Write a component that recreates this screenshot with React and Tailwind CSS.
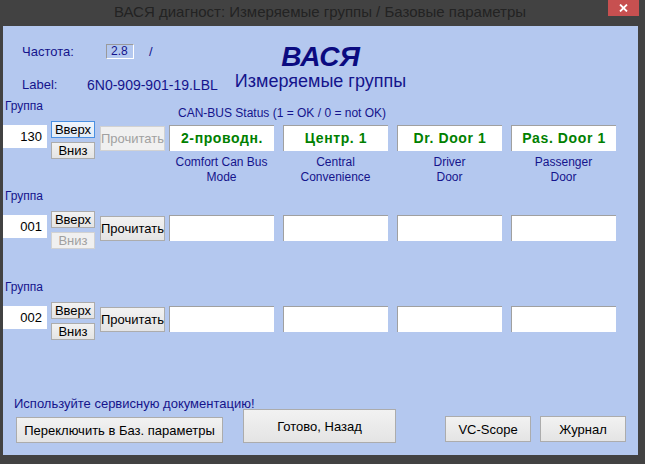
import React from "react";

const BTN = {
  normal: "border border-[#acacac] bg-gradient-to-b from-[#f2f2f2] to-[#e4e4e4] text-black",
  focus: "border border-[#4a90e2] bg-gradient-to-b from-[#eef4fc] to-[#e2ecf8] text-black",
  disabled: "border border-[#d2d2d2] bg-[#f0f0f0] text-[#a0a0a0]",
};

function Btn({ v = "normal", className = "", children }) {
  return (
    <div className={`${BTN[v]} ${className} flex items-center justify-center text-[13px] leading-none whitespace-nowrap`}>
      {children}
    </div>
  );
}

function Group({ className, num, status, up, down, read, values, labels }) {
  return (
    <div className={className}>
      <div className="flex items-start h-[22px] text-[12px] leading-[14px]">
        <div className="w-[175px] pl-[2px]">Группа</div>
        {status && <div className="mt-[7px]">{status}</div>}
      </div>
      <div className="flex items-start">
        <div className="mt-[4px] w-[44px] h-[23px] bg-white text-[13px] leading-[23px] text-right pr-[5px] text-black">
          {num}
        </div>
        <div className="ml-[4px] flex flex-col gap-[4px]">
          <Btn v={up} className="w-[44px] h-[17px]">Вверх</Btn>
          <Btn v={down} className="w-[44px] h-[17px]">Вниз</Btn>
        </div>
        <Btn v={read} className="ml-[5px] mt-[5px] w-[65px] h-[25px]">Прочитать</Btn>
        <div className="ml-[4px] mt-[4px] flex gap-[9px]">
          {values.map((val, i) => (
            <div key={i} className="w-[105px]">
              <div className="h-[26px] bg-white border-t border-l border-[#a0a0a0] flex items-center justify-center text-[14px] font-bold text-[#008000] tracking-[0.6px]">
                {val}
              </div>
              {labels && (
                <div className="mt-[4px] text-center text-[12px] leading-[15px]">
                  {labels[i][0]}
                  <br />
                  {labels[i][1]}
                </div>
              )}
            </div>
          ))}
        </div>
      </div>
    </div>
  );
}

export default function App() {
  return (
    <div className="w-[645px] h-[464px] bg-[#424242] flex flex-col overflow-hidden font-['Liberation_Sans',Arial,sans-serif]">
      {/* заголовок окна */}
      <div className="h-[26px] flex items-start">
        <div className="flex-1 pl-[32px] text-center text-[15px] leading-[24px] text-[#232323] whitespace-nowrap">
          ВАСЯ диагност: Измеряемые группы / Базовые параметры
        </div>
        <div className="mr-[6px] w-[31px] h-[16px] bg-[#c75050] flex items-center justify-center">
          <svg width="9" height="8" viewBox="0 0 9 8">
            <path d="M1 0.5 L8 7.5 M8 0.5 L1 7.5" stroke="white" strokeWidth="1.8" />
          </svg>
        </div>
      </div>

      <div className="ml-[3px] mr-[7px] h-[429px] bg-[#b4c8ef] flex flex-col text-[#14148c]">
        {/* шапка */}
        <div className="grid h-[73px]">
          <div className="[grid-area:1/1] pl-[19px]">
            <div className="mt-[18px] h-[15px] flex items-center text-[13px]">
              <span className="w-[84px]">Частота:</span>
              <span className="w-[28px] h-[15px] border border-t-[#9a9a9a] border-l-[#9a9a9a] border-b-white border-r-white text-[12px] leading-[13px] pl-[4px]">
                2.8
              </span>
              <span className="ml-[15px]">/</span>
            </div>
            <div className="mt-[18px] h-[16px] flex items-center">
              <span className="w-[65px] text-[13px]">Label:</span>
              <span className="text-[14px]">6N0-909-901-19.LBL</span>
            </div>
          </div>
          <div className="[grid-area:1/1] flex flex-col items-center">
            <div className="mt-[17px] text-[28px] leading-[28px] font-bold italic text-[#0b0b80]">ВАСЯ</div>
            <div className="text-[18px] leading-[20px]">Измеряемые группы</div>
          </div>
        </div>

        <Group
          className="h-[90px]"
          num="130"
          status="CAN-BUS Status (1 = OK / 0 = not OK)"
          up="focus"
          down="normal"
          read="disabled"
          values={["2-проводн.", "Центр. 1", "Dr. Door 1", "Pas. Door 1"]}
          labels={[
            ["Comfort Can Bus", "Mode"],
            ["Central", "Convenience"],
            ["Driver", "Door"],
            ["Passenger", "Door"],
          ]}
        />
        <Group
          className="h-[91px]"
          num="001"
          up="normal"
          down="disabled"
          read="normal"
          values={["", "", "", ""]}
        />
        <Group num="002" up="normal" down="normal" read="normal" values={["", "", "", ""]} />

        {/* низ */}
        <div className="mt-auto pb-[12px]">
          <div className="pl-[11px] text-[13px] leading-[15px]">Используйте сервисную документацию!</div>
          <div className="-mt-[2px] flex items-end">
            <Btn className="ml-[13px] w-[207px] h-[26px]">Переключить в Баз. параметры</Btn>
            <Btn className="ml-[20px] w-[153px] h-[34px]">Готово, Назад</Btn>
            <Btn className="ml-[49px] mb-[1px] w-[86px] h-[26px]">VC-Scope</Btn>
            <Btn className="ml-[9px] mb-[1px] w-[86px] h-[26px]">Журнал</Btn>
          </div>
        </div>
      </div>
    </div>
  );
}
